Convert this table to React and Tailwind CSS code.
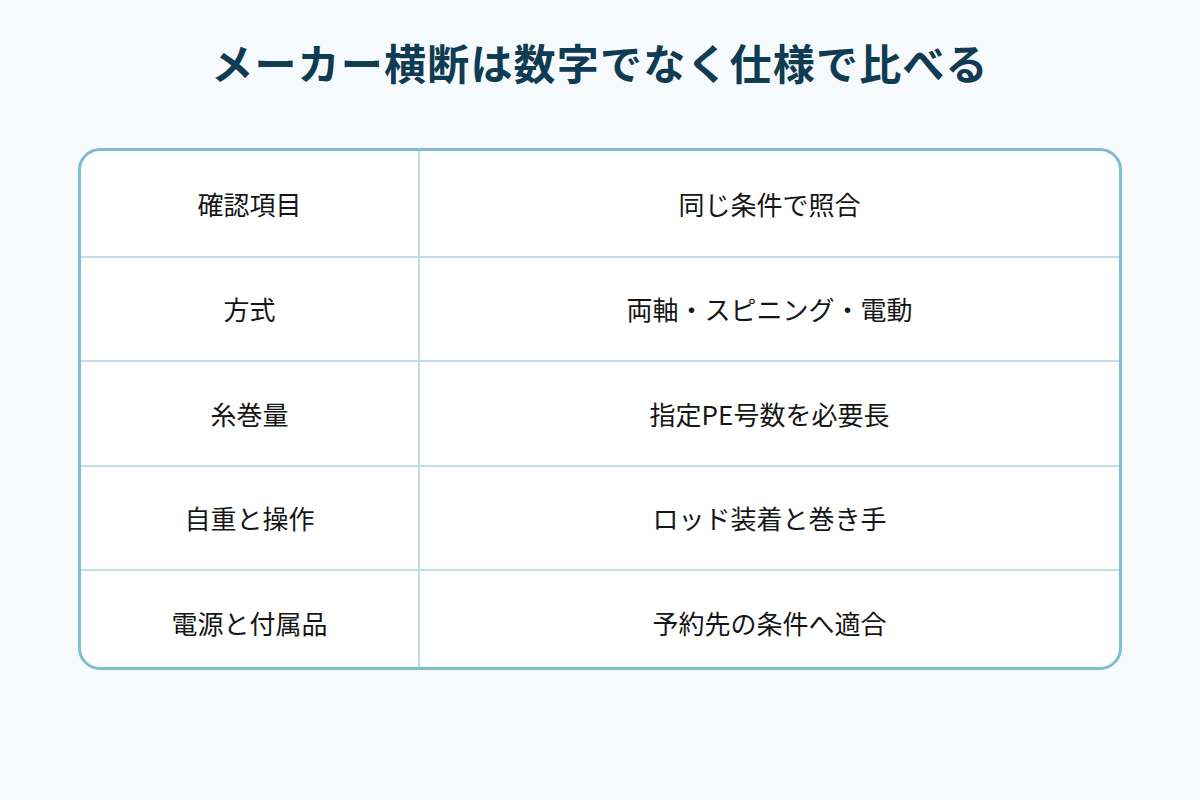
export default function App() {
  const rows = [
    ["確認項目", "同じ条件で照合"],
    ["方式", "両軸・スピニング・電動"],
    ["糸巻量", "指定PE号数を必要長"],
    ["自重と操作", "ロッド装着と巻き手"],
    ["電源と付属品", "予約先の条件へ適合"],
  ];
  return (
    <div
      className="w-[1200px] h-[800px] bg-[#f7fafc] flex flex-col items-center"
      style={{ fontFamily: '"Noto Sans CJK JP", "Noto Sans", sans-serif' }}
    >
      <h1 className="mt-[34px] h-[56px] leading-[56px] text-[42px] font-bold text-[#0f3c52] tracking-[1.2px]">
        メーカー横断は数字でなく仕様で比べる
      </h1>
      <div className="mt-[58px] w-[1044px] h-[522px] border-[3px] border-[#80bdd0] rounded-[22px] bg-white overflow-hidden">
        {rows.map((r, i) => (
          <div
            key={i}
            className={`flex h-[104.5px] shrink-0 ${i > 0 ? "border-t-2 border-[#c0dde5]" : ""}`}
          >
            <div className="w-[339px] shrink-0 border-r-2 border-[#c0dde5] flex items-center justify-center text-[26px] font-normal text-[#161616]">
              {r[0]}
            </div>
            <div className="flex-1 flex items-center justify-center text-[26px] font-normal text-[#161616]">
              {r[1]}
            </div>
          </div>
        ))}
      </div>
    </div>
  );
}
